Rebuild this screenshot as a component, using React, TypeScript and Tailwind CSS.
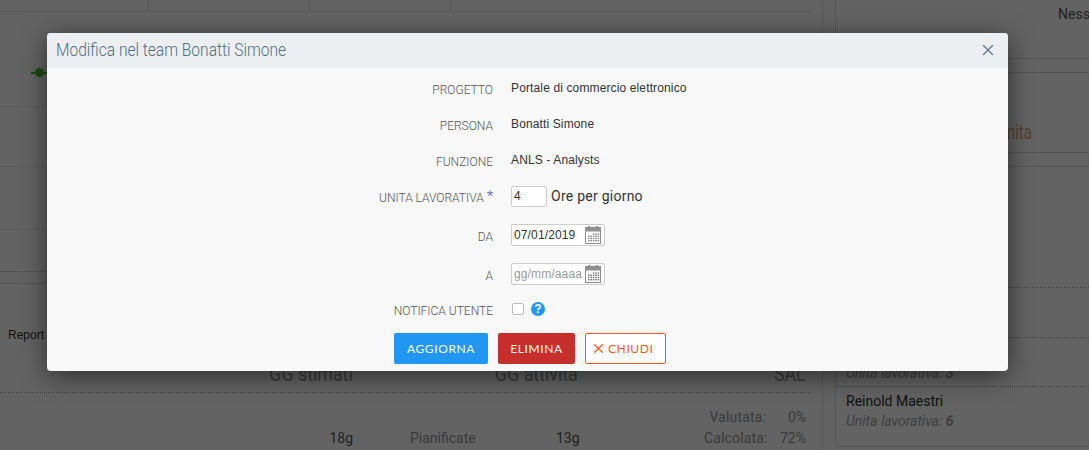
import React from 'react';
import { X } from 'lucide-react';

const roboto = "font-['Roboto','Liberation_Sans',sans-serif]";

function CalendarIcon({ faded }: { faded?: boolean }) {
  const cells = [];
  for (let r = 0; r < 4; r++) {
    for (let c = 0; c < 5; c++) {
      if (r === 0 && c < 2) continue;
      cells.push(<rect key={r + '-' + c} x={3 + c * 2.4} y={7.4 + r * 2.2} width="1.6" height="1.4" fill={faded ? '#777' : '#8a8a8a'} />);
    }
  }
  return (
    <svg width="16" height="18" viewBox="0 0 16 18" className="shrink-0">
      <rect x="0.5" y="1.5" width="15" height="16" fill="#fff" stroke="#8f8f8f" />
      <rect x="0" y="1" width="16" height="4.5" fill="#8f8f8f" />
      <rect x="3" y="0" width="2" height="2" fill="#8f8f8f" />
      <rect x="11" y="0" width="2" height="2" fill="#8f8f8f" />
      {cells}
    </svg>
  );
}

function Row({ label, h, children }: { label: React.ReactNode; h: string; children: React.ReactNode }) {
  return (
    <div className={`flex items-center ${h}`}>
      <div className={`w-[446px] pt-[3px] text-right text-[12px] font-light tracking-normal text-[#555] ${roboto}`}>{label}</div>
      <div className="ml-[18px] flex items-center">{children}</div>
    </div>
  );
}

function Background() {
  return (
    <div className={`flex h-[450px] w-[1089px] bg-[#636363] text-[#2b2b2b] ${roboto}`}>
      <div className="h-full w-[823px] shrink-0 border-r border-[#575757] pr-[11px]">
        <div className="flex h-[12px] border-b border-[#595959]">
          <div className="w-[149px] border-r border-[#595959]" />
          <div className="w-[161px] border-r border-[#595959]" />
          <div className="w-[141px] border-r border-[#595959]" />
        </div>
        <div className="h-[95px] border-b border-[#5c5c5c] pt-[56px]">
          <div className="ml-[31px] flex items-center">
            <div className="h-[2px] w-[4px] bg-[#1c4a14]" />
            <div className="h-[9px] w-[9px] rounded-full bg-[#1c4a14]" />
            <div className="h-[2px] w-[4px] bg-[#1c4a14]" />
          </div>
        </div>
        <div className="h-[60px] border-b border-[#5c5c5c]" />
        <div className="h-[63px] border-b border-[#5c5c5c]" />
        <div className="h-[42px] border-b border-[#555]" />
        <div className="h-[12px] border-b border-[#555]" />
        <div className="h-[109px] border-b border-dotted border-[#444]">
          <div className="pl-[8px] pt-[43px] font-['Liberation_Sans',sans-serif] text-[12px] leading-[16px] text-[#111]">Report</div>
          <div className="flex whitespace-nowrap pt-[19px] text-[20px] leading-[24px] text-[#3a3a3a]">
            <div className="w-[353px] text-right"><span className="inline-block origin-right scale-x-[0.89]">GG stimati</span></div>
            <div className="ml-[142px] w-[85px]"><span className="inline-block origin-left scale-x-[0.89]">GG attività</span></div>
            <div className="ml-[190px] w-[31px] text-right"><span className="inline-block origin-right scale-x-[0.89]">SAL</span></div>
          </div>
        </div>
        <div className="flex pt-[14px] text-[14px] leading-[21px] text-[#3a3a3a]">
          <div className="w-[353px] pt-[21px] text-right text-[#1f1f1f]">18g</div>
          <div className="ml-[57px] w-[68px] pt-[21px]">Pianificate</div>
          <div className="ml-[78px] w-[24px] pt-[21px] text-[#1f1f1f]">13g</div>
          <div className="ml-[124px] w-[62px] whitespace-nowrap text-right tracking-[0.15px]">
            <div>Valutata:</div>
            <div>Calcolata:</div>
          </div>
          <div className="w-[40px] text-right">
            <div>0%</div>
            <div>72%</div>
          </div>
        </div>
      </div>
      <div className="ml-[12px] h-[447px] flex-1 rounded-bl-[4px] border-b border-l border-[#555]">
        <div className="h-[59px] whitespace-nowrap border-b border-[#555] pl-[222px] pt-[5px] text-[14px] leading-[18px] text-[#222]">
          Nessuno
        </div>
        <div className="h-[14px] border-b border-[#555]" />
        <div className="h-[80px] whitespace-nowrap border-b border-[#555] pl-[159px] pt-[47px] text-[20px] leading-[24px] text-[#54402f]">
          <span className="inline-block origin-left scale-x-[0.75]">Finita</span>
        </div>
        <div className="h-[14px] border-b border-[#555]" />
        <div className="h-[121px] border-b border-dotted border-[#444]" />
        <div className="h-[50px] border-b border-dotted border-[#444]" />
        <div className="h-[49px] border-b border-dotted border-[#444] pl-[10px] pt-[26px]">
          <div className="text-[14px] italic leading-[18px] text-[#3f3f3f]">Unita lavorativa: <b>3</b></div>
        </div>
        <div className="pl-[10px] pt-[4px]">
          <div className="text-[14px] leading-[20px] text-[#111]">Reinold Maestri</div>
          <div className="text-[14px] italic leading-[20px] text-[#3f3f3f]">Unita lavorativa: <b>6</b></div>
        </div>
      </div>
    </div>
  );
}

export default function App() {
  return (
    <div className="relative h-[450px] w-[1089px] overflow-hidden">
      <Background />
      <div className="absolute left-[47px] top-[33px] h-[338px] w-[961px] overflow-hidden rounded-[4px] bg-[#f8f8f8] shadow-[0_5px_26px_rgba(0,0,0,0.55)]">
        <div className="flex h-[35px] items-center justify-between bg-[#ebeff2] pl-[9px] pr-[13px]">
          <div className={`mb-[2px] origin-left scale-x-[0.865] whitespace-nowrap text-[18px] font-light text-[#4f7082] ${roboto}`}>Modifica nel team Bonatti Simone</div>
          <X size={18} strokeWidth={2} className="mb-[2px] mr-[-2px] text-[#668394]" />
        </div>
        <div className="pt-[2px] font-['Liberation_Sans',sans-serif] text-[12px] tracking-[0.13px] text-[#333]">
          <Row label="PROGETTO" h="h-[36px]"><span>Portale di commercio elettronico</span></Row>
          <Row label="PERSONA" h="h-[36px]"><span>Bonatti Simone</span></Row>
          <Row label="FUNZIONE" h="h-[36px]"><span>ANLS - Analysts</span></Row>
          <Row
            label={<span>UNITA LAVORATIVA <span className="relative top-[-1px] text-[15px] leading-[12px] text-[#3f51b5]">*</span></span>}
            h="h-[36px]"
          >
            <div className="flex h-[21px] w-[36px] items-center rounded-[2px] border border-[#ccc] bg-white px-[2px]">4</div>
            <span className={`ml-[4px] text-[14px] tracking-[0.25px] ${roboto}`}>Ore per giorno</span>
          </Row>
          <Row label="DA" h="h-[42px]">
            <div className="flex h-[22px] w-[94px] items-center justify-between rounded-[2px] border border-[#ccc] bg-white pl-[2px] pr-[3px]">
              <span>07/01/2019</span>
              <CalendarIcon />
            </div>
          </Row>
          <Row label="A" h="h-[36px]">
            <div className="flex h-[22px] w-[94px] items-center justify-between rounded-[2px] border border-[#ccc] bg-white pl-[2px] pr-[3px]">
              <span className="text-[#999]">gg/mm/aaaa</span>
              <CalendarIcon faded />
            </div>
          </Row>
          <Row label="NOTIFICA UTENTE" h="h-[34px]">
            <div className="ml-[1px] h-[12px] w-[12px] rounded-[2px] border border-[#bbb] bg-white" />
            <div className="ml-[7px] flex h-[14px] w-[14px] items-center justify-center rounded-full bg-[#2196f3] text-[12px] font-bold leading-none text-white">?</div>
          </Row>
          <div className="mt-[7px] flex pl-[347px] font-['Lato',sans-serif] text-[12px] tracking-[0.6px]">
            <div className="flex h-[31px] w-[94px] items-center justify-center rounded-[2px] bg-[#2196f3] text-white">AGGIORNA</div>
            <div className="ml-[10px] flex h-[31px] w-[77px] items-center justify-center rounded-[2px] bg-[#c62f2b] text-white">ELIMINA</div>
            <div className="ml-[10px] flex h-[31px] w-[81px] items-center rounded-[2px] border border-[#ff5722] bg-white pl-[5px] text-[#ff5722]">
              <X size={15} strokeWidth={2} className="mr-[2px]" />
              CHIUDI
            </div>
          </div>
        </div>
      </div>
    </div>
  );
}
